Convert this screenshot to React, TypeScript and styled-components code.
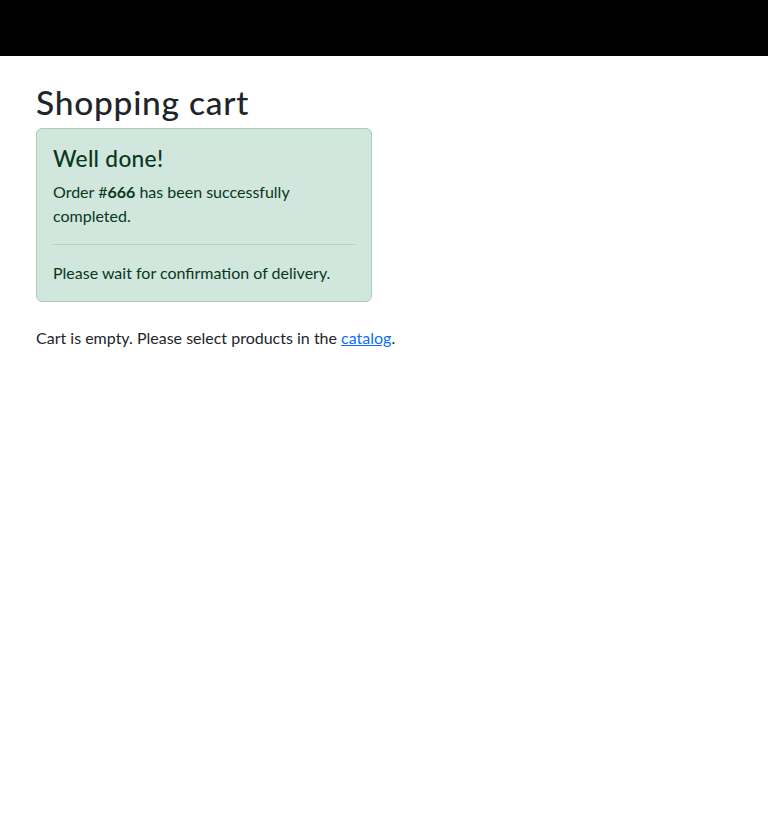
import React from "react";
import styled, { createGlobalStyle } from "styled-components";

const Global = createGlobalStyle`
  * { box-sizing: border-box; }
  body {
    margin: 0;
    font-family: "Segoe UI", Lato, "Noto Sans", sans-serif;
    font-size: 16px;
    line-height: 1.5;
    color: #212529;
    background: #fff;
  }
`;

const Navbar = styled.nav`
  height: 56px;
  background: #000;
`;

const Main = styled.main`
  max-width: 720px;
  margin: 0 auto;
  padding: 24px 12px 0;
`;

const Title = styled.h1`
  margin: 0 0 8px;
  padding-top: 2px;
  height: 40px;
  font-size: 33.5px;
  font-weight: 500;
  line-height: 1.2;
  letter-spacing: 0.75px;
`;

const Alert = styled.div`
  width: 336px;
  padding: 16px;
  margin-bottom: 24px;
  border: 1px solid #a3cfbb;
  border-radius: 6px;
  background: #d1e7dd;
  color: #0a3622;
`;

const AlertHeading = styled.h4`
  margin: 0 0 8px;
  font-size: 22.7px;
  font-weight: 500;
  line-height: 1.2;
  letter-spacing: 0.3px;
`;

const Para = styled.p<{ $last?: boolean }>`
  margin: 0 0 ${(p) => (p.$last ? "0" : "16px")};
`;

const Strong = styled.strong`
  font-weight: 700;
`;

const Rule = styled.hr`
  margin: 0 0 16px;
  border: 0;
  border-top: 1px solid currentColor;
  opacity: 0.25;
`;

const Link = styled.a`
  color: #0d6efd;
  text-decoration: underline;
`;

export default function App() {
  return (
    <>
      <Global />
      <Navbar />
      <Main>
        <Title>Shopping cart</Title>
        <Alert>
          <AlertHeading>Well done!</AlertHeading>
          <Para>
            Order #<Strong>666</Strong> has been successfully completed.
          </Para>
          <Rule />
          <Para $last>Please wait for confirmation of delivery.</Para>
        </Alert>
        <Para>
          Cart is empty. Please select products in the <Link href="#">catalog</Link>.
        </Para>
      </Main>
    </>
  );
}
